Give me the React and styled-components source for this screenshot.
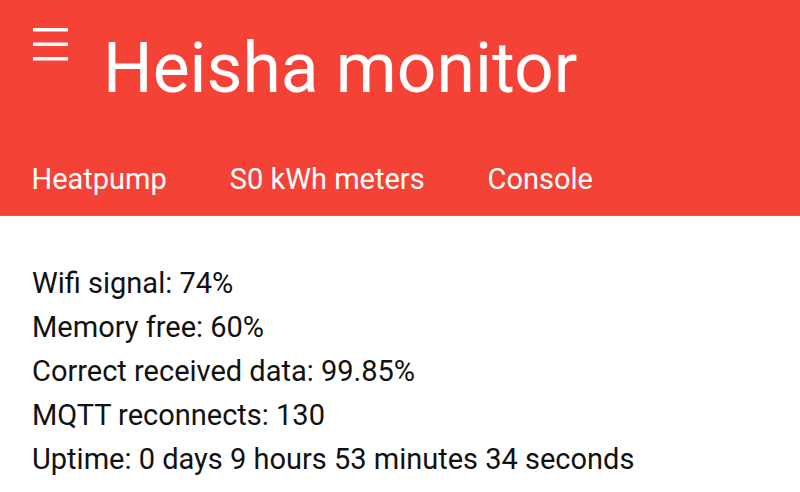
import React from 'react';
import styled, { createGlobalStyle } from 'styled-components';

const GlobalStyle = createGlobalStyle`
  html, body {
    margin: 0;
    padding: 0;
    background: #ffffff;
    font-family: Roboto, "Liberation Sans", sans-serif;
  }
`;

const stats = [
  'Wifi signal: 74%',
  'Memory free: 60%',
  'Correct received data: 99.85%',
  'MQTT reconnects: 130',
  'Uptime: 0 days 9 hours 53 minutes 34 seconds',
];

function App() {
  return (
    <>
      <GlobalStyle />
      <Header>
        <TopRow>
          <MenuButton aria-label="menu">
            <svg width="35" height="34" viewBox="0 0 35 34">
              <rect x="0" y="0" width="35" height="3.5" fill="#fff" />
              <rect x="0" y="14.5" width="35" height="3.5" fill="#fff" />
              <rect x="0" y="29" width="35" height="3.5" fill="#fff" />
            </svg>
          </MenuButton>
          <Title>Heisha monitor</Title>
        </TopRow>
        <Nav>
          <NavItem>Heatpump</NavItem>
          <NavItem>S0 kWh meters</NavItem>
          <NavItem>Console</NavItem>
        </Nav>
      </Header>
      <Content>
        {stats.map((s) => (
          <Line key={s}>{s}</Line>
        ))}
      </Content>
    </>
  );
}

export default App;

const Header = styled.header`
  background: #f44336;
  border-bottom: 1px solid #f6564a;
  height: 215px;
  display: flex;
  flex-direction: column;
  color: #fff;
`;

const TopRow = styled.div`
  display: flex;
  align-items: flex-start;
  height: 142px;
`;

const MenuButton = styled.div`
  margin: 28px 0 0 33px;
  line-height: 0;
`;

const Title = styled.h1`
  margin: 0 0 0 35px;
  padding-top: 34px;
  font-size: 69.6px;
  font-weight: 400;
  line-height: 1;
`;

const Nav = styled.nav`
  display: flex;
  height: 73px;
  align-items: center;
`;

const NavItem = styled.a`
  padding: 0 31.5px;
  font-size: 29px;
  color: #fff;
  cursor: pointer;
`;

const Content = styled.main`
  padding: 45px 32px 0;
`;

const Line = styled.div`
  font-size: 29px;
  line-height: 44px;
  color: #111;
`;
